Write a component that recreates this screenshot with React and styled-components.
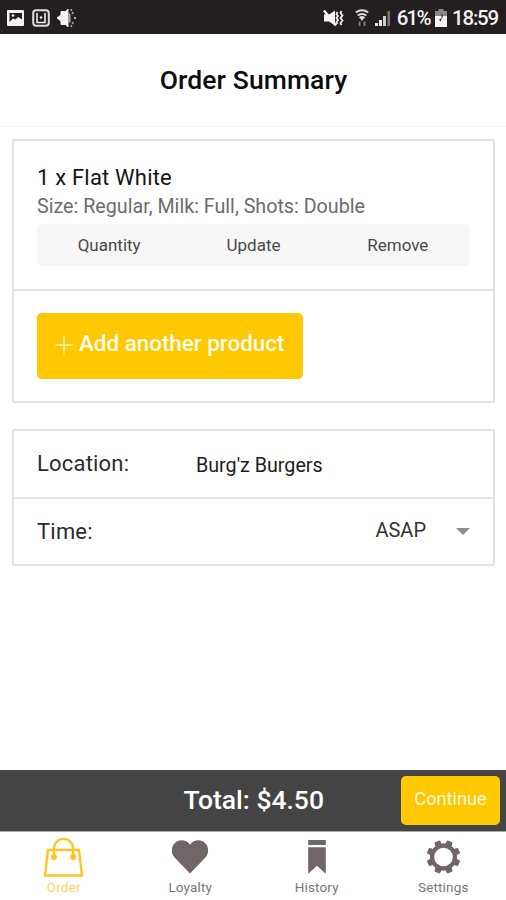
import React from "react";
import styled, { createGlobalStyle } from "styled-components";

const GlobalStyle = createGlobalStyle`
  * {
    box-sizing: border-box;
  }
  body {
    margin: 0;
    background: #fff;
    font-family: Roboto, "Liberation Sans", sans-serif;
  }
  button {
    font-family: inherit;
    border: 0;
    padding: 0;
    background: none;
  }
`;

const Page = styled.div`
  display: flex;
  flex-direction: column;
  width: 506px;
  height: 900px;
  overflow: hidden;
  background: #fff;
`;

const StatusBar = styled.div`
  display: flex;
  align-items: center;
  justify-content: space-between;
  flex: none;
  height: 34px;
  padding: 1px 8px 0 6px;
  background: #231f20;
  color: #f1f1f1;
`;

const StatusGroup = styled.div`
  display: flex;
  align-items: center;
`;

const StatusIcon = styled.svg`
  display: block;
  flex: none;
  margin-right: ${(p) => p.$gap || 0}px;
`;

const StatusText = styled.span`
  font-size: 20.5px;
  font-weight: 500;
  line-height: 34px;
  letter-spacing: ${(p) => p.$spacing}px;
  margin-right: ${(p) => p.$gap || 0}px;
  white-space: nowrap;
`;

const Header = styled.header`
  display: flex;
  align-items: center;
  justify-content: center;
  flex: none;
  height: 93px;
  border-bottom: 1px solid #f3f3f3;
`;

const Title = styled.h1`
  margin: 0 0 0 1px;
  font-size: 26.5px;
  line-height: 34px;
  font-weight: 500;
  letter-spacing: 0.1px;
  color: #0c0c0c;
`;

const Content = styled.main`
  display: flex;
  flex-direction: column;
  flex: 1;
  gap: 26px;
  padding: 12px 11px 0 12px;
`;

const Card = styled.section`
  border: 2px solid #e3e3e3;
  border-radius: 2px;
`;

const Product = styled.div`
  height: 148px;
  padding: 22px 23px 0;
`;

const ProductName = styled.div`
  font-size: 22px;
  line-height: 30px;
  letter-spacing: 0.2px;
  color: #151515;
`;

const ProductOptions = styled.div`
  font-size: 19.7px;
  line-height: 28px;
  color: #6c6c6c;
`;

const Actions = styled.div`
  display: grid;
  grid-template-columns: repeat(3, 1fr);
  height: 42px;
  margin-top: 3px;
  border-radius: 5px;
  background: #f7f7f7;
`;

const Action = styled.button`
  font-size: 17px;
  line-height: 40px;
  color: #484848;
`;

const AddRow = styled.div`
  height: 112px;
  padding: 22px 23px 0;
  border-top: 2px solid #e3e3e3;
`;

const AddButton = styled.button`
  display: flex;
  align-items: center;
  gap: 6px;
  width: 266px;
  height: 66px;
  padding: 0 0 7px 18px;
  border-radius: 5px;
  background: #ffc800;
  color: #fffdf2;
  font-size: 22.4px;
  font-weight: 500;
  white-space: nowrap;
`;

const PlusIcon = styled.svg`
  display: block;
  flex: none;
  margin-top: 4px;
`;

const Field = styled.div`
  display: flex;
  align-items: center;
  height: ${(p) => p.$height}px;
  padding: 0 23px;
  border-top: ${(p) => (p.$divided ? "2px solid #e9e9e9" : "0")};
`;

const FieldLabel = styled.div`
  width: 159px;
  font-size: 22px;
  line-height: 30px;
  letter-spacing: 0.2px;
  color: #2c2c2c;
`;

const FieldValue = styled.div`
  margin-top: 3px;
  font-size: 19.7px;
  line-height: 30px;
  color: #1c1c1c;
`;

const Select = styled.button`
  display: flex;
  align-items: center;
  gap: 30px;
  margin-left: auto;
  font-size: 20px;
  line-height: 30px;
  color: #333;
  margin-top: -4px;
`;

const Caret = styled.span`
  margin-top: 4px;
  border: 7px solid transparent;
  border-top-color: #8f8f8f;
  border-bottom: 0;
`;

const TotalBar = styled.div`
  display: flex;
  align-items: center;
  justify-content: flex-end;
  flex: none;
  height: 61px;
  padding-right: 6px;
  background: #444;
`;

const Total = styled.div`
  margin: 0 77px 1px 0;
  font-size: 26.5px;
  font-weight: 500;
  line-height: 34px;
  color: #fff;
`;

const ContinueButton = styled.button`
  width: 99px;
  height: 49px;
  padding-bottom: 4px;
  border-radius: 5px;
  background: #ffc800;
  color: #fffae0;
  font-size: 18.2px;
`;

const Nav = styled.nav`
  display: grid;
  grid-template-columns: repeat(4, 1fr);
  flex: none;
  height: 69px;
  border-top: 1px solid #aaa;
`;

const NavItem = styled.button`
  display: flex;
  flex-direction: column;
  align-items: center;
  color: ${(p) => (p.$active ? "#ffc420" : "#716667")};
`;

const NavIcon = styled.svg`
  display: block;
  width: 44px;
  height: 48px;
`;

const NavLabel = styled.span`
  padding-left: 1px;
  font-size: 13.5px;
  line-height: 15px;
  letter-spacing: 0.15px;
  color: ${(p) => (p.$active ? "#ffd25a" : "#777")};
`;

// Outline of an eight tooth gear, two teeth on top
function gearPath(cx, cy) {
  const points = [];
  for (let i = 0; i < 8; i++) {
    const mid = 22.5 + i * 45;
    [
      [-13, 13.2],
      [-8.5, 16.6],
      [8.5, 16.6],
      [13, 13.2],
    ].forEach(([offset, r]) => {
      const a = ((mid + offset) * Math.PI) / 180;
      points.push(
        `${(cx + r * Math.cos(a)).toFixed(2)} ${(cy + r * Math.sin(a)).toFixed(2)}`
      );
    });
  }
  return `M${points.join("L")}Z`;
}

const navItems = [
  {
    label: "Order",
    active: true,
    icon: (
      <g fill="none" stroke="currentColor" strokeWidth="2.3">
        <path d="M7 18H38L41 43.5H4Z" />
        <path d="M13 25V16.5a9.6 9.6 0 0 1 19.2 0V25" />
        <circle cx="13" cy="25" r="1.8" fill="currentColor" />
        <circle cx="32.2" cy="25" r="1.8" fill="currentColor" />
      </g>
    ),
  },
  {
    label: "Loyalty",
    icon: (
      <path
        fill="currentColor"
        d="M22 41.5L6.8 25.8C3.2 22 3 16 5.8 12.2C9.5 7.2 17.5 6.8 22 12.5C26.5 6.8 34.5 7.2 38.2 12.2C41 16 40.8 22 37.2 25.8Z"
      />
    ),
  },
  {
    label: "History",
    icon: (
      <g fill="currentColor">
        <path d="M14.2 8h17.6v5H14.2z" />
        <path d="M14.2 15.3h17.6V41.8L23 33.7l-8.8 8.1z" />
      </g>
    ),
  },
  {
    label: "Settings",
    icon: (
      <>
        <path
          d={gearPath(22.5, 25)}
          fill="currentColor"
          stroke="currentColor"
          strokeLinejoin="round"
        />
        <circle cx="22.5" cy="25" r="9.3" fill="#fff" />
      </>
    ),
  },
];

export default function App() {
  return (
    <Page>
      <GlobalStyle />
      <StatusBar>
        <StatusGroup>
          <StatusIcon width="19" height="18" viewBox="0 0 19 18" $gap={7}>
            <rect x="1" y="1" width="17" height="16" rx="1" fill="#f4f4f4" />
            <path d="M3.5 4H16v6.5L12.5 8 9 10.5 7 9.5 3.5 13z" fill="#231f20" />
            <circle cx="7" cy="6.5" r="1.3" fill="#f4f4f4" />
          </StatusIcon>
          <StatusIcon width="18" height="18" viewBox="0 0 18 18" $gap={6}>
            <rect x="1.2" y="1.2" width="15.6" height="15.6" rx="3" fill="none" stroke="#ddd" strokeWidth="2" />
            <path d="M5 4v9.5h8V4" fill="none" stroke="#eee" strokeWidth="1.6" />
            <circle cx="9" cy="8.5" r="1.3" fill="#eee" />
          </StatusIcon>
          <StatusIcon width="22" height="20" viewBox="0 0 22 20">
            <path
              d="M12 1v18L9.5 16.500H5V13L1 10l4-3V3.500h4.500z"
              fill="#f4f4f4"
              stroke="#f4f4f4"
              strokeLinejoin="round"
            />
            <path
              d="M13.5 5.500v9M14.500 2.500l1.500-1M18 10h2M14.500 17.500l1.500 1M16 5.500l1.500-1M16 14.500l1.500 1"
              fill="none"
              stroke="#aaa"
              strokeWidth="2"
            />
          </StatusIcon>
        </StatusGroup>
        <StatusGroup>
          <StatusIcon width="21" height="18" viewBox="0 0 21 18" $gap={11}>
            <path d="M1 5.5h5l6-4v15l-6-4H1z" fill="#f4f4f4" />
            <path d="M1 1.500l12 15" stroke="#f4f4f4" strokeWidth="2.5" />
            <path
              d="M14.500 3l-1 2 1.500 2-1.500 2 1.500 2-1.500 2 1 2M18.500 2l-1 2 2 2.500-2 2.500 2 2.500-2 2.500 1 2"
              fill="none"
              stroke="#eee"
              strokeWidth="1.8"
            />
          </StatusIcon>
          <StatusIcon width="14" height="18" viewBox="0 0 14 18" $gap={5}>
            <path
              d="M.8 3.5q6.200-4.500 12.400 0M2.700 6.500q4.300-3 8.600 0M4.500 9q2.500-1.800 5 0"
              fill="none"
              stroke="#ddd"
              strokeWidth="2"
            />
            <path d="M5 9h4l-2 3z" fill="#ddd" />
            <path d="M4.500 12.500v4.500M9.500 12.500v4.500" stroke="#777" strokeWidth="2" />
          </StatusIcon>
          <StatusIcon width="17" height="16" viewBox="0 0 17 16" $gap={6}>
            <path d="M1 13h3v3H1zM5 10h3v6H5z" fill="#e8e8e8" />
            <path d="M9 6h3v10H9z" fill="#ccc" />
            <path d="M13.500 1H16v15h-2.500z" fill="#777" />
          </StatusIcon>
          <StatusText $spacing={-1.7} $gap={5}>
            61%
          </StatusText>
          <StatusIcon width="12" height="18" viewBox="0 0 12 18" $gap={5}>
            <path d="M3.500 0h5v2H12v5H0V2h3.500z" fill="#888" />
            <path d="M0 7h12v11H0z" fill="#f4f4f4" />
            <path d="M6.500 4v5.500L4 10.500l1.500 2L8 7z" fill="#231f20" />
          </StatusIcon>
          <StatusText $spacing={-1.2}>18:59</StatusText>
        </StatusGroup>
      </StatusBar>

      <Header>
        <Title>Order Summary</Title>
      </Header>

      <Content>
        <Card>
          <Product>
            <ProductName>1 x Flat White</ProductName>
            <ProductOptions>Size: Regular, Milk: Full, Shots: Double</ProductOptions>
            <Actions>
              <Action>Quantity</Action>
              <Action>Update</Action>
              <Action>Remove</Action>
            </Actions>
          </Product>
          <AddRow>
            <AddButton>
              <PlusIcon width="18" height="18" viewBox="0 0 18 18">
                <path d="M9 0.5v17M0.5 9h17" stroke="#ffe894" strokeWidth="2" />
              </PlusIcon>
              Add another product
            </AddButton>
          </AddRow>
        </Card>

        <Card>
          <Field $height={66}>
            <FieldLabel>Location:</FieldLabel>
            <FieldValue>Burg'z Burgers</FieldValue>
          </Field>
          <Field $height={67} $divided>
            <FieldLabel>Time:</FieldLabel>
            <Select>
              ASAP
              <Caret />
            </Select>
          </Field>
        </Card>
      </Content>

      <TotalBar>
        <Total>Total: $4.50</Total>
        <ContinueButton>Continue</ContinueButton>
      </TotalBar>

      <Nav>
        {navItems.map((item) => (
          <NavItem key={item.label} $active={item.active}>
            <NavIcon viewBox="0 0 44 48">{item.icon}</NavIcon>
            <NavLabel $active={item.active}>{item.label}</NavLabel>
          </NavItem>
        ))}
      </Nav>
    </Page>
  );
}
